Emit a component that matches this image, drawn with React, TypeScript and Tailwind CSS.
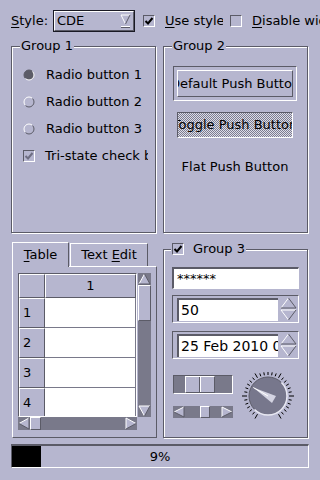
import React from "react";

const RAISED =
  "border border-t-white border-l-white border-r-[#5b5b67] border-b-[#5b5b67]";
const SUNKEN =
  "border border-t-[#5b5b67] border-l-[#5b5b67] border-r-white border-b-white";

function Check({ color = "#000" }: { color?: string }) {
  return (
    <svg width="10" height="10" viewBox="0 0 10 10">
      <path d="M1.5 5 L4 7.5 L8.5 2" fill="none" stroke={color} strokeWidth="2" />
    </svg>
  );
}

function CheckBox({ checked, tri }: { checked?: boolean; tri?: boolean }) {
  return (
    <span className={`flex h-[12px] w-[12px] shrink-0 items-center justify-center ${SUNKEN}`}>
      {checked && <Check />}
      {tri && <Check color="#6e6e82" />}
    </span>
  );
}

function Radio({ on }: { on?: boolean }) {
  return (
    <svg width="12" height="12" viewBox="0 0 12 12" className="shrink-0">
      <circle cx="6" cy="6" r="5" fill={on ? "#5b5b67" : "#b6b6cf"} />
      <path d="M2.46 9.54 A5 5 0 0 1 9.54 2.46" fill="none" stroke={on ? "#5b5b67" : "#fff"} strokeWidth="1" />
      <path d="M9.54 2.46 A5 5 0 0 1 2.46 9.54" fill="none" stroke={on ? "#fff" : "#5b5b67"} strokeWidth="1" />
    </svg>
  );
}

type Dir = "up" | "down" | "left" | "right";

function Arrow({ dir, w, h }: { dir: Dir; w: number; h: number }) {
  let pts: [number, number][] = [];
  let light: string[] = [];
  let dark: string[] = [];
  if (dir === "up") {
    pts = [[w / 2, 1], [w - 1, h - 1], [1, h - 1]];
    light = [`M1 ${h - 1} L${w / 2} 1`];
    dark = [`M${w / 2} 1 L${w - 1} ${h - 1} L1 ${h - 1}`];
  } else if (dir === "down") {
    pts = [[1, 1], [w - 1, 1], [w / 2, h - 1]];
    light = [`M${w / 2} ${h - 1} L1 1 L${w - 1} 1`];
    dark = [`M${w - 1} 1 L${w / 2} ${h - 1}`];
  } else if (dir === "left") {
    pts = [[1, h / 2], [w - 1, 1], [w - 1, h - 1]];
    light = [`M1 ${h / 2} L${w - 1} 1`];
    dark = [`M${w - 1} 1 L${w - 1} ${h - 1} L1 ${h / 2}`];
  } else {
    pts = [[1, 1], [w - 1, h / 2], [1, h - 1]];
    light = [`M1 ${h - 1} L1 1 L${w - 1} ${h / 2}`];
    dark = [`M${w - 1} ${h / 2} L1 ${h - 1}`];
  }
  return (
    <svg width={w} height={h} viewBox={`0 0 ${w} ${h}`} className="shrink-0">
      <polygon points={pts.map((p) => p.join(",")).join(" ")} fill="#b6b6cf" />
      {light.map((d, i) => (
        <path key={"l" + i} d={d} fill="none" stroke="#fff" strokeWidth="1" />
      ))}
      {dark.map((d, i) => (
        <path key={"d" + i} d={d} fill="none" stroke="#5b5b67" strokeWidth="1" />
      ))}
    </svg>
  );
}

function Dial() {
  const cx = 28;
  const cy = 28;
  const rad = (d: number) => (d * Math.PI) / 180;
  const ticks = Array.from({ length: 31 }, (_, i) => {
    const a = rad(240 - i * 10);
    const r1 = 21;
    const r2 = i % 6 === 0 ? 26 : 24;
    return (
      <line
        key={i}
        x1={cx + r1 * Math.cos(a)}
        y1={cy - r1 * Math.sin(a)}
        x2={cx + r2 * Math.cos(a)}
        y2={cy - r2 * Math.sin(a)}
        stroke="#000"
        strokeWidth="1"
      />
    );
  });
  const a = rad(150);
  const len = 17;
  const back = 8;
  const tip = [cx + len * Math.cos(a), cy - len * Math.sin(a)];
  const b1 = [cx + back * Math.cos(a + (Math.PI * 5) / 6), cy - back * Math.sin(a + (Math.PI * 5) / 6)];
  const b2 = [cx + back * Math.cos(a - (Math.PI * 5) / 6), cy - back * Math.sin(a - (Math.PI * 5) / 6)];
  return (
    <svg width="56" height="56" viewBox="0 0 56 56" className="shrink-0">
      {ticks}
      <circle cx={cx} cy={cy} r="19" fill="#77778c" />
      <path d="M14.56 41.44 A19 19 0 0 1 41.44 14.56" fill="none" stroke="#5b5b67" strokeWidth="1" />
      <path d="M41.44 14.56 A19 19 0 0 1 14.56 41.44" fill="none" stroke="#e8e8f2" strokeWidth="1.5" />
      <polygon points={[tip, b1, b2].map((p) => p.join(",")).join(" ")} fill="#d4d4e2" />
      <line x1={tip[0]} y1={tip[1]} x2={cx} y2={cy} stroke="#fff" strokeWidth="1" />
    </svg>
  );
}

function Field({ text }: { text: string }) {
  return (
    <div className={`flex h-[28px] w-[127px] items-center ${SUNKEN} bg-[#b6b6cf] pl-[4px]`}>
      <div className="flex h-[23px] w-[101px] items-center overflow-hidden whitespace-nowrap border-t-2 border-l-2 border-t-[#5b5b67] border-l-[#5b5b67] bg-white pl-[2px] text-[14px]">
        {text}
      </div>
      <div className="ml-[2px] flex flex-col">
        <Arrow dir="up" w={17} h={12} />
        <Arrow dir="down" w={17} h={12} />
      </div>
    </div>
  );
}

export default function App() {
  return (
    <div className="flex h-[480px] w-[320px] flex-col overflow-hidden bg-[#b6b6cf] pl-[11px] pt-[10px] font-['DejaVu_Sans',sans-serif] text-[13px] leading-[16px] text-black">
      {/* top row */}
      <div className="flex h-[22px] items-center whitespace-nowrap">
        <span className="w-[42px] shrink-0">
          <u className="underline-offset-2">S</u>tyle:
        </span>
        <div className="h-[22px] w-[82px] shrink-0 border border-[#1a1a24]">
          <div className={`flex h-full items-center ${RAISED} pl-[2px] pr-[2px]`}>
            <span className="flex-1">CDE</span>
            <svg width="11" height="15" viewBox="0 0 11 15">
              <polygon points="1,1 10,1 5.5,10" fill="#b6b6cf" />
              <path d="M5.5 10 L1 1 L10 1" fill="none" stroke="#fff" />
              <path d="M10 1 L5.5 10" fill="none" stroke="#5b5b67" />
              <path d="M1 12.5 L10 12.5" stroke="#fff" />
              <path d="M1 13.5 L10 13.5" stroke="#5b5b67" />
            </svg>
          </div>
        </div>
        <span className="ml-[8px] shrink-0">
          <CheckBox checked />
        </span>
        <span className="ml-[10px] w-[58px] shrink-0 overflow-hidden">
          <u className="underline-offset-2">U</u>se style's standard palette
        </span>
        <span className="ml-[7px] shrink-0">
          <CheckBox />
        </span>
        <span className="ml-[10px] shrink-0">
          <u className="underline-offset-2">D</u>isable widgets
        </span>
      </div>

      {/* row 1 */}
      <div className="mt-[6px] grid grid-cols-[145px_145px] gap-x-[7px]">
        <fieldset className="h-[195px] w-[145px] min-w-0 border border-[#5b5b67] shadow-[inset_1px_1px_0_#fff,1px_1px_0_#fff]">
          <legend className="ml-[8px] bg-[#b6b6cf] px-[1px] leading-[16px]">Group 1</legend>
          <div className="flex flex-col pl-[11px] pt-[7px]">
            <div className="flex h-[27px] items-center gap-[11px]">
              <Radio on />
              <span>Radio button 1</span>
            </div>
            <div className="flex h-[27px] items-center gap-[11px]">
              <Radio />
              <span>Radio button 2</span>
            </div>
            <div className="flex h-[27px] items-center gap-[11px]">
              <Radio />
              <span>Radio button 3</span>
            </div>
            <div className="flex h-[27px] w-[125px] items-center gap-[10px] overflow-hidden whitespace-nowrap">
              <CheckBox tri />
              <span>Tri-state check box</span>
            </div>
          </div>
        </fieldset>

        <fieldset className="h-[195px] w-[145px] min-w-0 border border-[#5b5b67] shadow-[inset_1px_1px_0_#fff,1px_1px_0_#fff]">
          <legend className="ml-[8px] bg-[#b6b6cf] px-[1px] leading-[16px]">Group 2</legend>
          <div className="flex flex-col items-center pr-[1px]">
            <div className={`mt-[12px] h-[35px] w-[124px] ${SUNKEN} p-[3px]`}>
              <div className={`flex h-full items-center justify-center overflow-hidden whitespace-nowrap ${RAISED}`}>
                Default Push Button
              </div>
            </div>
            <div
              className={`mt-[11px] flex h-[26px] w-[116px] items-center justify-center overflow-hidden whitespace-nowrap ${SUNKEN} bg-[repeating-conic-gradient(#7d7d90_0_25%,#dcdce8_0_50%)] bg-[length:2px_2px]`}
            >
              Toggle Push Button
            </div>
            <div className="mt-[16px] flex h-[26px] w-[116px] items-center justify-center whitespace-nowrap">
              Flat Push Button
            </div>
          </div>
        </fieldset>
      </div>

      {/* row 2 */}
      <div className="mt-[8px] grid h-[197px] grid-cols-[145px_145px] gap-x-[7px]">
        <div className="ml-[1px] w-[145px] pt-[1px]">
          <div className="flex h-[24px] items-start">
            <div className="relative z-10 flex h-[25px] w-[57px] items-center justify-center border-t border-l border-r border-t-white border-l-white border-r-[#5b5b67] bg-[#b6b6cf]">
              <span>
                <u className="underline-offset-2">T</u>able
              </span>
            </div>
            <div className="ml-[1px] mt-[1px] flex h-[23px] w-[78px] items-center justify-center border-t border-l border-r border-t-white border-l-white border-r-[#5b5b67]">
              <span>
                Text <u className="underline-offset-2">E</u>dit
              </span>
            </div>
          </div>
          <div className={`h-[172px] ${RAISED} pl-[5px] pt-[6px]`}>
            <div className="flex">
              <div className={`h-[144px] w-[119px] overflow-hidden ${SUNKEN}`}>
                <div className="flex h-[24px]">
                  <div className={`w-[26px] ${RAISED}`} />
                  <div className={`flex w-[91px] items-center justify-center ${RAISED}`}>1</div>
                </div>
                {[1, 2, 3, 4].map((n) => (
                  <div key={n} className="flex h-[30px]">
                    <div className={`flex w-[26px] items-center pl-[3px] ${RAISED}`}>{n}</div>
                    <div className="w-[91px] border-b border-r border-[#79798a] bg-white" />
                  </div>
                ))}
              </div>
              <div className="ml-[1px] flex h-[144px] w-[13px] flex-col bg-[#79798a]">
                <Arrow dir="up" w={13} h={12} />
                <div className={`h-[36px] bg-[#b6b6cf] ${RAISED}`} />
                <div className="flex-1" />
                <Arrow dir="down" w={13} h={12} />
              </div>
            </div>
            <div className="flex h-[13px] w-[119px] bg-[#79798a]">
              <Arrow dir="left" w={12} h={13} />
              <div className={`w-[11px] bg-[#b6b6cf] ${RAISED}`} />
              <div className="flex-1" />
              <Arrow dir="right" w={12} h={13} />
            </div>
          </div>
        </div>

        <fieldset className="h-[197px] w-[145px] min-w-0 border border-[#5b5b67] shadow-[inset_1px_1px_0_#fff,1px_1px_0_#fff]">
          <legend className="ml-[7px] bg-[#b6b6cf] px-[1px] leading-[16px]">
            <span className="flex items-center gap-[9px]">
              <CheckBox checked />
              Group 3
            </span>
          </legend>
          <div className="flex flex-col pl-[8px]">
            <div className={`mt-[10px] flex h-[22px] w-[127px] items-center border-t-2 border-l-2 border-r border-b border-t-[#5b5b67] border-l-[#5b5b67] border-r-white border-b-white bg-white pl-[3px]`}>
              ******
            </div>
            <div className="mt-[6px]">
              <Field text="50" />
            </div>
            <div className="mt-[8px]">
              <Field text="25 Feb 2010 00:00" />
            </div>
            <div className="mt-[9px] flex items-center">
              <div className="ml-[1px] flex w-[60px] flex-col">
                <div className={`flex h-[19px] bg-[#79798a] ${SUNKEN}`}>
                  <div className={`ml-[11px] flex w-[30px] bg-[#b6b6cf] ${RAISED}`}>
                    <div className="ml-[13px] w-[1px] bg-[#5b5b67]" />
                    <div className="w-[1px] bg-white" />
                  </div>
                </div>
                <div className="mt-[12px] flex h-[12px] bg-[#79798a]">
                  <Arrow dir="left" w={12} h={12} />
                  <div className="w-[15px]" />
                  <div className={`w-[10px] bg-[#b6b6cf] ${RAISED}`} />
                  <div className="flex-1" />
                  <Arrow dir="right" w={12} h={12} />
                </div>
              </div>
              <div className="ml-[7px]">
                <Dial />
              </div>
            </div>
          </div>
        </fieldset>
      </div>

      {/* progress */}
      <div className="mt-[6px] grid h-[24px] w-[298px] border-t-2 border-l border-r border-b border-t-[#5b5b67] border-l-[#5b5b67] border-r-white border-b-white">
        <div className="col-start-1 row-start-1 h-full w-[29px] bg-black" />
        <div className="col-start-1 row-start-1 self-center justify-self-center">9%</div>
      </div>
    </div>
  );
}
